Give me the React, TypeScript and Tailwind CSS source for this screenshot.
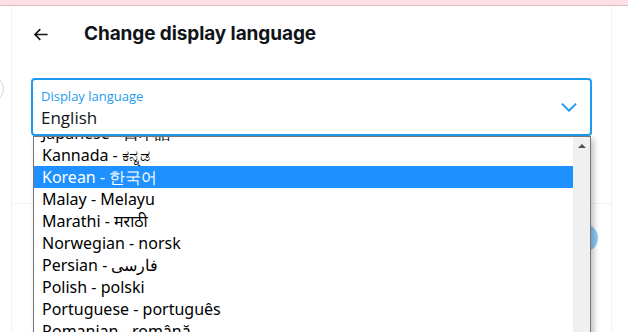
const languages = [
  'Japanese - 日本語',
  'Kannada - ಕನ್ನಡ',
  'Korean - 한국어',
  'Malay - Melayu',
  'Marathi - मराठी',
  'Norwegian - norsk',
  'Persian - فارسی',
  'Polish - polski',
  'Portuguese - português',
  'Romanian - română',
  'Russian - русский',
];

export default function App() {
  return (
    <div className="relative w-[628px] h-[332px] overflow-hidden bg-white font-['Open_Sans',sans-serif] text-[#0f1419]">
      {/* top banner */}
      <div className="h-[6px] bg-[#fde0e5] border-b border-[#dcbcc2]" />

      <div className="flex h-[326px]">
        {/* left rail */}
        <div className="relative w-[12px] border-r border-[#eff3f4]">
          <div className="absolute left-[-22px] top-[70px] w-[26px] h-[26px] rounded-full border border-[#cfd9de]" />
        </div>

        {/* main column */}
        <div className="w-[600px] border-r border-[#eff3f4] flex flex-col">
          <div className="h-[54px] flex items-center pl-[19px] pt-[3px]">
            <svg viewBox="0 0 24 24" className="w-[19px] h-[19px]" fill="#0f1419">
              <path d="M7.414 13l5.043 5.04-1.414 1.42L3.586 12l7.457-7.46 1.414 1.42L7.414 11H21v2H7.414z" />
            </svg>
            <h1 className="ml-[34px] text-[19px] font-bold tracking-[-0.1px] font-['Inter',sans-serif]">
              Change display language
            </h1>
          </div>

          <div className="px-[19px] pt-[18px]">
            <div className="relative h-[58px] rounded-[4px] border-2 border-[#1d9bf0] px-[8px] pt-[8px]">
              <div className="text-[13px] leading-[16px] text-[#1d9bf0]">Display language</div>
              <div className="text-[17px] leading-[24px] mt-[2px]">English</div>
              <svg viewBox="0 0 24 24" className="absolute right-[10px] top-[16px] w-[22px] h-[22px]" fill="#1d9bf0">
                <path d="M3.543 8.96l1.414-1.42L12 14.59l7.043-7.05 1.414 1.42L12 17.41 3.543 8.96z" />
              </svg>
            </div>
          </div>

          <div className="mt-[67px] border-t border-[#eff3f4] flex-1 relative">
            <div className="absolute right-[13px] top-[20px] w-[28px] h-[28px] rounded-full bg-[#8ecdf8]" />
          </div>
        </div>
      </div>

      {/* native dropdown popup */}
      <div className="absolute left-[33px] top-[136px] w-[558px] h-[200px] bg-white border border-[#767676] shadow-[3px_3px_6px_rgba(0,0,0,0.25)] flex font-['Noto_Sans',sans-serif]">
        <div className="flex-1 overflow-hidden">
          <div className="mt-[-15px]">
            {languages.map((lang) => (
              <div
                key={lang}
                className={`h-[22px] leading-[22px] pl-[8px] text-[16px] whitespace-nowrap ${
                  lang.startsWith('Korean') ? 'bg-[#1e90ff] text-white' : 'text-black'
                }`}
              >
                {lang}
              </div>
            ))}
          </div>
        </div>
        <div className="w-[17px] bg-[#f0f0f0] flex justify-center pt-[7px]">
          <div className="w-0 h-0 border-l-[4px] border-r-[4px] border-b-[4px] border-l-transparent border-r-transparent border-b-[#505050]" />
        </div>
      </div>
    </div>
  );
}
